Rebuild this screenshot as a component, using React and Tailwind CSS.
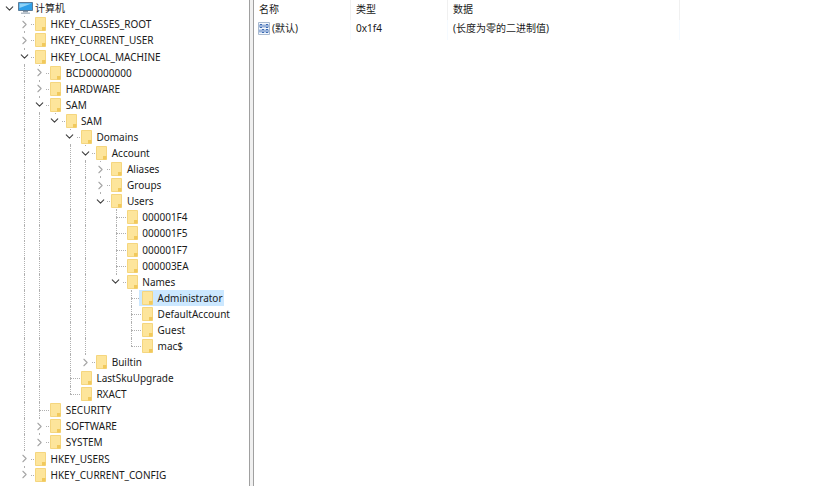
import { ChevronRight, ChevronDown } from 'lucide-react'

const tree = [
  { name: 'HKEY_CLASSES_ROOT', kids: [] },
  { name: 'HKEY_CURRENT_USER', kids: [] },
  {
    name: 'HKEY_LOCAL_MACHINE',
    open: true,
    kids: [
      { name: 'BCD00000000', kids: [] },
      { name: 'HARDWARE', kids: [] },
      {
        name: 'SAM',
        open: true,
        kids: [
          {
            name: 'SAM',
            open: true,
            kids: [
              {
                name: 'Domains',
                open: true,
                kids: [
                  {
                    name: 'Account',
                    open: true,
                    kids: [
                      { name: 'Aliases', kids: [] },
                      { name: 'Groups', kids: [] },
                      {
                        name: 'Users',
                        open: true,
                        kids: [
                          { name: '000001F4', leaf: true },
                          { name: '000001F5', leaf: true },
                          { name: '000001F7', leaf: true },
                          { name: '000003EA', leaf: true },
                          {
                            name: 'Names',
                            open: true,
                            kids: [
                              { name: 'Administrator', leaf: true, selected: true },
                              { name: 'DefaultAccount', leaf: true },
                              { name: 'Guest', leaf: true },
                              { name: 'mac$', leaf: true },
                            ],
                          },
                        ],
                      },
                    ],
                  },
                  { name: 'Builtin', kids: [] },
                ],
              },
              { name: 'LastSkuUpgrade', leaf: true },
              { name: 'RXACT', leaf: true },
            ],
          },
        ],
      },
      { name: 'SECURITY', leaf: true },
      { name: 'SOFTWARE', kids: [] },
      { name: 'SYSTEM', kids: [] },
    ],
  },
  { name: 'HKEY_USERS', kids: [] },
  { name: 'HKEY_CURRENT_CONFIG', kids: [] },
]

function Folder() {
  return (
    <svg width="11" height="14" viewBox="0 0 11 14" className="shrink-0">
      <path d="M0.5 0.5H10.5V13.5H0.5Z" fill="#FDE59B" stroke="#F5D67F" />
      <path d="M7 13.5V10H10.5V13.5Z" fill="#F1C95C" />
    </svg>
  )
}

function Computer() {
  return (
    <svg width="15" height="12" viewBox="0 0 15 12" className="shrink-0">
      <path d="M0.5 0.5H14.5V8.5H0.5Z" fill="#2F9FE8" stroke="#5B7C99" />
      <path d="M1.5 1.5H13.5L1.5 6Z" fill="#8FD3F7" />
      <path d="M5 9H10V10.5H5Z" fill="#8A98A6" />
      <path d="M3 10.5H12V12H3Z" fill="#B4BEC8" />
    </svg>
  )
}

function BinaryIcon() {
  return (
    <svg width="12" height="13" viewBox="0 0 12 13" className="shrink-0">
      <path d="M0.5 0.5H11.5V12.5H0.5Z" fill="#F4F8FD" stroke="#A9BAD0" />
      <path d="M2 2.5H4M2 2.5V5.5H4V2.5M6 2.5V5.5M8 2.5H10V5.5H8V2.5" fill="none" stroke="#3E6CB5" />
      <path d="M2 7.5V10.5M4 7.5H6V10.5H4V7.5M8 7.5H10V10.5H8V7.5" fill="none" stroke="#3E6CB5" />
    </svg>
  )
}

function Guide({ on }) {
  return (
    <div className="w-[15.3px] shrink-0 h-full pl-[8px]">
      {on && <div className="h-full border-l border-dotted border-[#b0b0b0]" />}
    </div>
  )
}

function Row({ node, guides, last }) {
  return (
    <>
      <div className="h-[16.08px] flex items-center">
        <div className="w-[16px] shrink-0" />
        {guides.map((on, i) => (
          <Guide key={i} on={on} />
        ))}
        <div className="relative w-[19px] h-full shrink-0">
          {/* tree connector */}
          <div className={`absolute left-[8px] top-0 border-l border-dotted border-[#b0b0b0] ${last ? 'h-1/2' : 'h-full'}`} />
          <div className="absolute left-[8px] w-[10px] top-1/2 border-t border-dotted border-[#b0b0b0]" />
          {!node.leaf && (
            <div className="absolute left-[1px] top-[1px] w-[14px] h-[14px] bg-white flex items-center justify-center">
              {node.open ? (
                <ChevronDown size={13} strokeWidth={2} className="text-[#404040]" />
              ) : (
                <ChevronRight size={13} strokeWidth={2} className="text-[#a6a6a6]" />
              )}
            </div>
          )}
        </div>
        <div className={`relative -ml-[3px] pl-[3px] pr-[1px] h-full flex items-center ${node.selected ? 'bg-[#cce8ff]' : ''}`}>
          <Folder />
          <span className="ml-[4.5px] leading-none">{node.name}</span>
        </div>
      </div>
      {node.open &&
        node.kids.map((kid, i) => (
          <Row key={kid.name + i} node={kid} guides={[...guides, !last]} last={i === node.kids.length - 1} />
        ))}
    </>
  )
}

export default function App() {
  return (
    <div className="h-[486px] w-[819px] overflow-hidden bg-white flex text-[10px] text-[#1a1a1a] font-['Noto_Sans','Noto_Sans_CJK_SC',sans-serif]">
      {/* key tree */}
      <div className="w-[249px] shrink-0 overflow-hidden pt-[0.3px]">
        <div className="h-[16.08px] flex items-center">
          <div className="w-[18px] flex justify-center shrink-0">
            <ChevronDown size={13} strokeWidth={2} className="text-[#404040]" />
          </div>
          <Computer />
          <span className="ml-[2px]">计算机</span>
        </div>
        {tree.map((node, i) => (
          <Row key={node.name} node={node} guides={[]} last={i === tree.length - 1} />
        ))}
      </div>

      {/* splitter */}
      <div className="w-[5px] shrink-0 bg-[#f0f0f0] border-x border-[#a0a0a0]" />

      {/* value list */}
      <div className="flex-1 flex items-start">
        <div className="w-[97px] shrink-0">
          <div className="h-[20px] pb-[2px] flex items-center pl-[5px] border-r border-[#f0f0f0]">名称</div>
          <div className="h-[20px] pb-[4px] flex items-center pl-[4px] gap-[2px] border-r border-[#f5faff]">
            <BinaryIcon />
            <span>(默认)</span>
          </div>
        </div>
        <div className="w-[97px] shrink-0">
          <div className="h-[20px] pb-[2px] flex items-center pl-[5px] border-r border-[#f0f0f0]">类型</div>
          <div className="h-[20px] pb-[4px] flex items-center pl-[5px] border-r border-[#f5faff]">0x1f4</div>
        </div>
        <div className="w-[232px] shrink-0">
          <div className="h-[20px] pb-[2px] flex items-center pl-[5px] border-r border-[#f0f0f0]">数据</div>
          <div className="h-[20px] pb-[4px] flex items-center pl-[5px] border-r border-[#f5faff]">(长度为零的二进制值)</div>
        </div>
      </div>
    </div>
  )
}
